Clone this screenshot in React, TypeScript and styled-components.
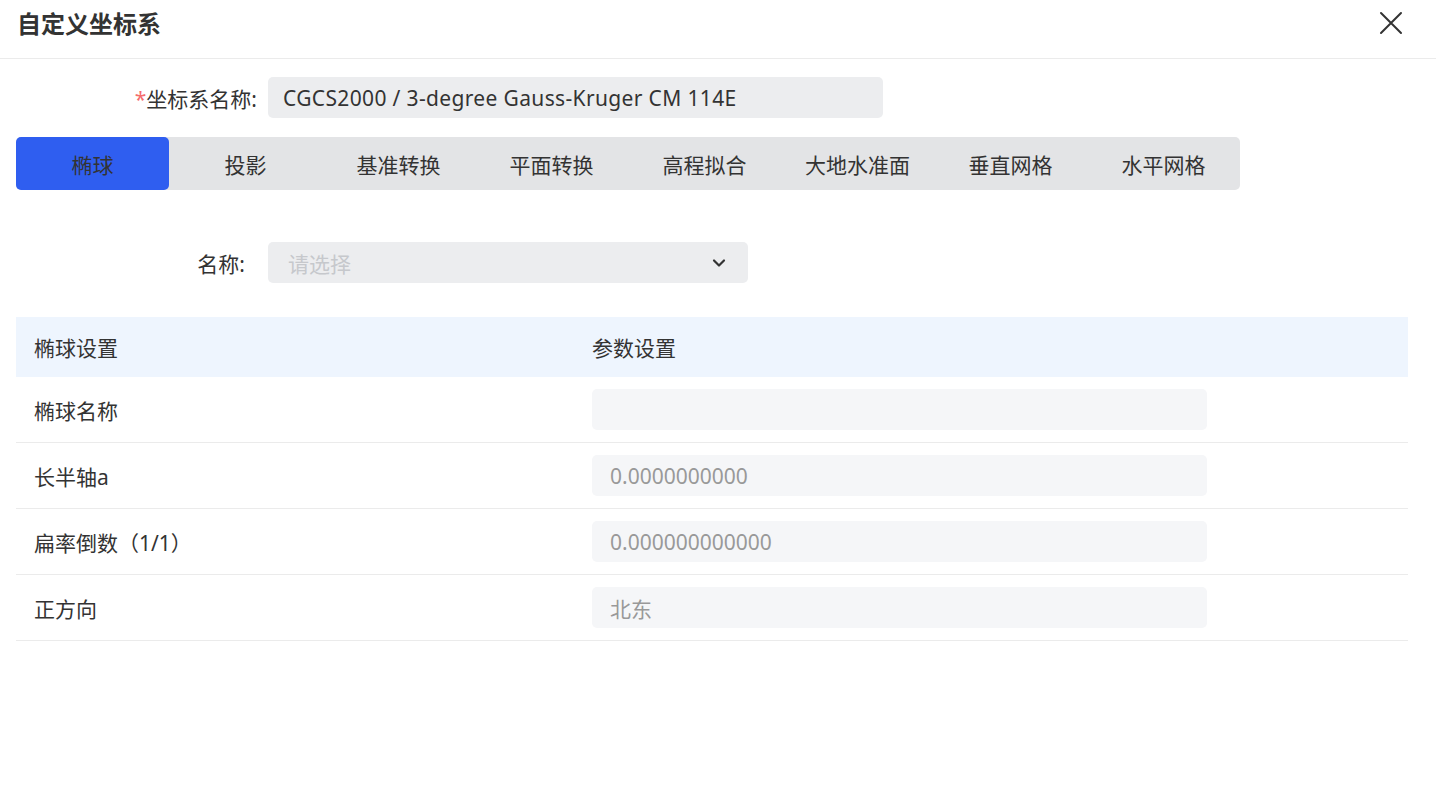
import styled, { createGlobalStyle } from "styled-components";

const GlobalStyle = createGlobalStyle`
  body {
    margin: 0;
    background: #fff;
    font-family: "Noto Sans", "Noto Sans CJK SC", sans-serif;
    color: #333;
  }
`;

const Dialog = styled.div`
  width: 1436px;
  min-height: 811px;
  background: #fff;
`;

const Header = styled.div`
  height: 58px;
  display: flex;
  align-items: center;
  justify-content: space-between;
  padding: 0 32px 0 17px;
  border-bottom: 1px solid #ebebeb;
`;

const Title = styled.div`
  font-size: 24px;
  font-weight: 700;
  color: #333;
  margin-top: -14px;
`;

const CloseButton = styled.button`
  border: none;
  background: none;
  padding: 0;
  width: 26px;
  height: 26px;
  display: flex;
  align-items: center;
  justify-content: center;
  cursor: pointer;
  margin-top: -12px;
`;

const Body = styled.div`
  padding: 18px 28px 0 16px;
`;

const FormRow = styled.div`
  display: flex;
  align-items: center;
`;

const Label = styled.label<{ $pad: number }>`
  width: 252px;
  box-sizing: border-box;
  padding-right: ${(p) => p.$pad}px;
  text-align: right;
  font-size: 21px;
  color: #333;
`;

const Required = styled.span`
  color: #f56c6c;
`;

const TextInput = styled.div`
  width: 615px;
  height: 41px;
  box-sizing: border-box;
  background: #ecedef;
  border-radius: 5px;
  padding: 0 15px;
  display: flex;
  align-items: center;
  font-size: 21px;
  letter-spacing: 0.35px;
  color: #333;
`;

const Tabs = styled.div`
  margin-top: 19px;
  width: 1224px;
  height: 53px;
  background: #e3e4e6;
  border-radius: 5px;
  display: grid;
  grid-template-columns: repeat(8, 1fr);
`;

const Tab = styled.div<{ $active?: boolean }>`
  display: flex;
  align-items: center;
  justify-content: center;
  font-size: 21px;
  color: #333;
  border-radius: 5px;
  background: ${(p) => (p.$active ? "#2f5ef0" : "transparent")};
  cursor: pointer;
`;

const SelectRow = styled(FormRow)`
  margin-top: 52px;
`;

const Select = styled.div`
  width: 480px;
  height: 41px;
  box-sizing: border-box;
  background: #ecedef;
  border-radius: 5px;
  padding: 0 22px 0 20px;
  display: flex;
  align-items: center;
  justify-content: space-between;
  font-size: 21px;
  color: #c6c8cc;
`;

const Table = styled.div`
  margin-top: 34px;
  width: 1392px;
`;

const HeadRow = styled.div`
  display: grid;
  grid-template-columns: 558px 1fr;
  height: 60px;
  align-items: center;
  background: #eef5fe;
  font-size: 21px;
  color: #333;
`;

const Row = styled.div`
  display: grid;
  grid-template-columns: 558px 1fr;
  height: 65px;
  align-items: center;
  border-bottom: 1px solid #ebebeb;
  font-size: 21px;
  color: #333;
`;

const Cell = styled.div`
  padding-left: 18px;
`;

const ValueInput = styled.div`
  width: 615px;
  height: 41px;
  box-sizing: border-box;
  background: #f5f6f8;
  border-radius: 5px;
  padding: 0 18px;
  display: flex;
  align-items: center;
  font-size: 21px;
  color: #999;
`;

const tabs = ["椭球", "投影", "基准转换", "平面转换", "高程拟合", "大地水准面", "垂直网格", "水平网格"];

const params = [
  { name: "椭球名称", value: "" },
  { name: "长半轴a", value: "0.0000000000" },
  { name: "扁率倒数（1/1）", value: "0.000000000000" },
  { name: "正方向", value: "北东" },
];

export default function App() {
  return (
    <Dialog>
      <GlobalStyle />
      <Header>
        <Title>自定义坐标系</Title>
        <CloseButton aria-label="关闭">
          <svg width="24" height="24" viewBox="0 0 24 24" fill="none" stroke="#333" strokeWidth="2" strokeLinecap="round">
            <path d="M2 2L22 22M22 2L2 22" />
          </svg>
        </CloseButton>
      </Header>
      <Body>
        <FormRow>
          <Label $pad={11}>
            <Required>*</Required>坐标系名称:
          </Label>
          <TextInput>CGCS2000 / 3-degree Gauss-Kruger CM 114E</TextInput>
        </FormRow>
        <Tabs>
          {tabs.map((t, i) => (
            <Tab key={t} $active={i === 0}>
              {t}
            </Tab>
          ))}
        </Tabs>
        <SelectRow>
          <Label $pad={23}>名称:</Label>
          <Select>
            <span>请选择</span>
            <svg width="14" height="10" viewBox="0 0 14 10" fill="none" stroke="#333" strokeWidth="2.2" strokeLinecap="round" strokeLinejoin="round">
              <path d="M2 2.5L7 7.5L12 2.5" />
            </svg>
          </Select>
        </SelectRow>
        <Table>
          <HeadRow>
            <Cell>椭球设置</Cell>
            <Cell>参数设置</Cell>
          </HeadRow>
          {params.map((p) => (
            <Row key={p.name}>
              <Cell>{p.name}</Cell>
              <Cell>
                <ValueInput>{p.value}</ValueInput>
              </Cell>
            </Row>
          ))}
        </Table>
      </Body>
    </Dialog>
  );
}
